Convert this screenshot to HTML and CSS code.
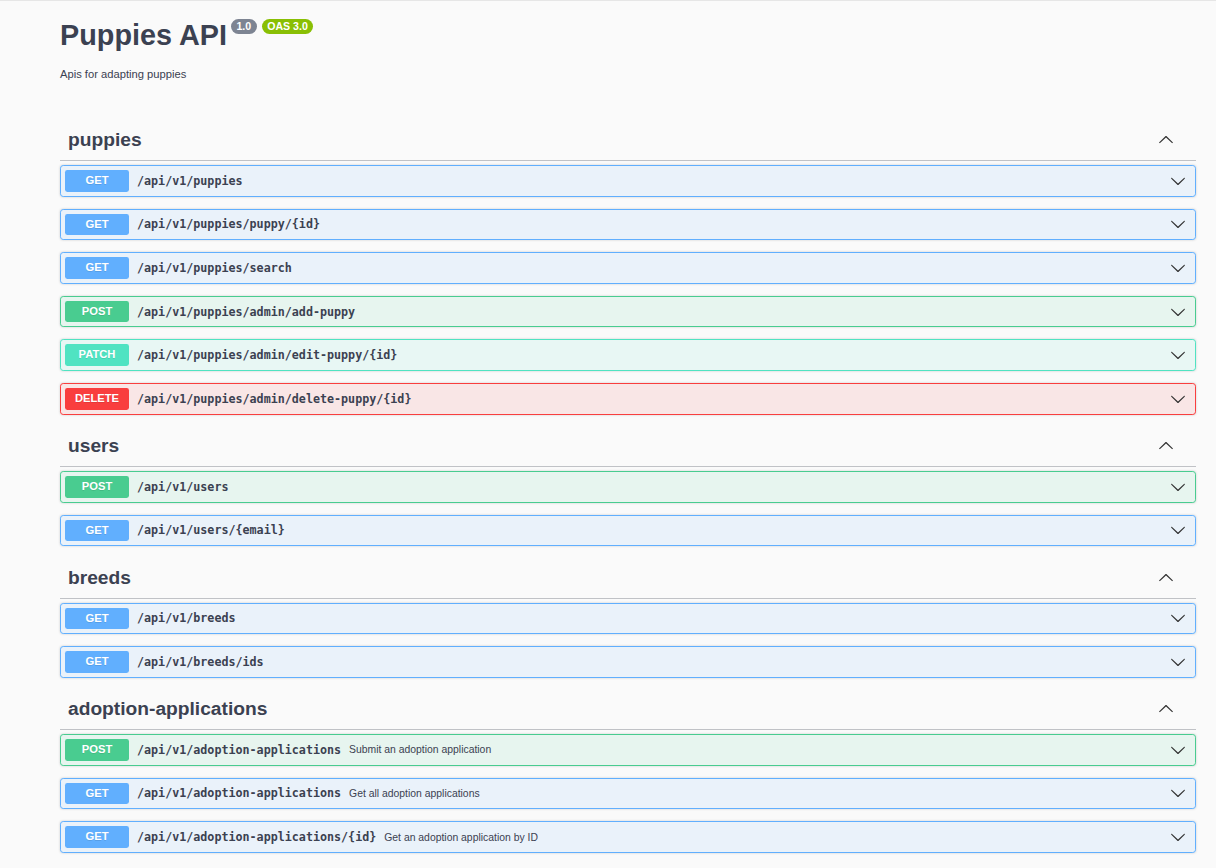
FILE: index.html
```html
<!DOCTYPE html>
<html lang="en">
<head>
<meta charset="utf-8">
<title>Puppies API</title>
<link rel="stylesheet" href="styles.css">
</head>
<body>
<div class="page">
  <div class="info">
    <div class="title-row">
      <h2 class="title">Puppies API</h2>
      <span class="badge badge-version">1.0</span>
      <span class="badge badge-oas">OAS 3.0</span>
    </div>
    <p class="description">Apis for adapting puppies</p>
  </div>

  <section class="tag-section">
    <h3 class="tag">
      <span class="tag-name">puppies</span>
      <svg class="tag-arrow" viewBox="0 0 20 20"><path d="M17.418 6.109c.272-.268.709-.268.979 0s.271.701 0 .969l-7.908 7.83c-.27.268-.707.268-.979 0l-7.908-7.83c-.27-.268-.27-.701 0-.969.271-.268.709-.268.979 0L10 13.25l7.418-7.141z"/></svg>
    </h3>
    <div class="opblock get"><span class="method">GET</span><span class="path">/api/v1/puppies</span><svg class="op-arrow" viewBox="0 0 20 20"><path d="M17.418 6.109c.272-.268.709-.268.979 0s.271.701 0 .969l-7.908 7.83c-.27.268-.707.268-.979 0l-7.908-7.83c-.27-.268-.27-.701 0-.969.271-.268.709-.268.979 0L10 13.25l7.418-7.141z"/></svg></div>
    <div class="opblock get"><span class="method">GET</span><span class="path">/api/v1/puppies/puppy/{id}</span><svg class="op-arrow" viewBox="0 0 20 20"><path d="M17.418 6.109c.272-.268.709-.268.979 0s.271.701 0 .969l-7.908 7.83c-.27.268-.707.268-.979 0l-7.908-7.83c-.27-.268-.27-.701 0-.969.271-.268.709-.268.979 0L10 13.25l7.418-7.141z"/></svg></div>
    <div class="opblock get"><span class="method">GET</span><span class="path">/api/v1/puppies/search</span><svg class="op-arrow" viewBox="0 0 20 20"><path d="M17.418 6.109c.272-.268.709-.268.979 0s.271.701 0 .969l-7.908 7.83c-.27.268-.707.268-.979 0l-7.908-7.83c-.27-.268-.27-.701 0-.969.271-.268.709-.268.979 0L10 13.25l7.418-7.141z"/></svg></div>
    <div class="opblock post"><span class="method">POST</span><span class="path">/api/v1/puppies/admin/add-puppy</span><svg class="op-arrow" viewBox="0 0 20 20"><path d="M17.418 6.109c.272-.268.709-.268.979 0s.271.701 0 .969l-7.908 7.83c-.27.268-.707.268-.979 0l-7.908-7.83c-.27-.268-.27-.701 0-.969.271-.268.709-.268.979 0L10 13.25l7.418-7.141z"/></svg></div>
    <div class="opblock patch"><span class="method">PATCH</span><span class="path">/api/v1/puppies/admin/edit-puppy/{id}</span><svg class="op-arrow" viewBox="0 0 20 20"><path d="M17.418 6.109c.272-.268.709-.268.979 0s.271.701 0 .969l-7.908 7.83c-.27.268-.707.268-.979 0l-7.908-7.83c-.27-.268-.27-.701 0-.969.271-.268.709-.268.979 0L10 13.25l7.418-7.141z"/></svg></div>
    <div class="opblock delete"><span class="method">DELETE</span><span class="path">/api/v1/puppies/admin/delete-puppy/{id}</span><svg class="op-arrow" viewBox="0 0 20 20"><path d="M17.418 6.109c.272-.268.709-.268.979 0s.271.701 0 .969l-7.908 7.83c-.27.268-.707.268-.979 0l-7.908-7.83c-.27-.268-.27-.701 0-.969.271-.268.709-.268.979 0L10 13.25l7.418-7.141z"/></svg></div>
  </section>

  <section class="tag-section">
    <h3 class="tag">
      <span class="tag-name">users</span>
      <svg class="tag-arrow" viewBox="0 0 20 20"><path d="M17.418 6.109c.272-.268.709-.268.979 0s.271.701 0 .969l-7.908 7.83c-.27.268-.707.268-.979 0l-7.908-7.83c-.27-.268-.27-.701 0-.969.271-.268.709-.268.979 0L10 13.25l7.418-7.141z"/></svg>
    </h3>
    <div class="opblock post"><span class="method">POST</span><span class="path">/api/v1/users</span><svg class="op-arrow" viewBox="0 0 20 20"><path d="M17.418 6.109c.272-.268.709-.268.979 0s.271.701 0 .969l-7.908 7.83c-.27.268-.707.268-.979 0l-7.908-7.83c-.27-.268-.27-.701 0-.969.271-.268.709-.268.979 0L10 13.25l7.418-7.141z"/></svg></div>
    <div class="opblock get"><span class="method">GET</span><span class="path">/api/v1/users/{email}</span><svg class="op-arrow" viewBox="0 0 20 20"><path d="M17.418 6.109c.272-.268.709-.268.979 0s.271.701 0 .969l-7.908 7.83c-.27.268-.707.268-.979 0l-7.908-7.83c-.27-.268-.27-.701 0-.969.271-.268.709-.268.979 0L10 13.25l7.418-7.141z"/></svg></div>
  </section>

  <section class="tag-section">
    <h3 class="tag">
      <span class="tag-name">breeds</span>
      <svg class="tag-arrow" viewBox="0 0 20 20"><path d="M17.418 6.109c.272-.268.709-.268.979 0s.271.701 0 .969l-7.908 7.83c-.27.268-.707.268-.979 0l-7.908-7.83c-.27-.268-.27-.701 0-.969.271-.268.709-.268.979 0L10 13.25l7.418-7.141z"/></svg>
    </h3>
    <div class="opblock get"><span class="method">GET</span><span class="path">/api/v1/breeds</span><svg class="op-arrow" viewBox="0 0 20 20"><path d="M17.418 6.109c.272-.268.709-.268.979 0s.271.701 0 .969l-7.908 7.83c-.27.268-.707.268-.979 0l-7.908-7.83c-.27-.268-.27-.701 0-.969.271-.268.709-.268.979 0L10 13.25l7.418-7.141z"/></svg></div>
    <div class="opblock get"><span class="method">GET</span><span class="path">/api/v1/breeds/ids</span><svg class="op-arrow" viewBox="0 0 20 20"><path d="M17.418 6.109c.272-.268.709-.268.979 0s.271.701 0 .969l-7.908 7.83c-.27.268-.707.268-.979 0l-7.908-7.83c-.27-.268-.27-.701 0-.969.271-.268.709-.268.979 0L10 13.25l7.418-7.141z"/></svg></div>
  </section>

  <section class="tag-section">
    <h3 class="tag">
      <span class="tag-name">adoption-applications</span>
      <svg class="tag-arrow" viewBox="0 0 20 20"><path d="M17.418 6.109c.272-.268.709-.268.979 0s.271.701 0 .969l-7.908 7.83c-.27.268-.707.268-.979 0l-7.908-7.83c-.27-.268-.27-.701 0-.969.271-.268.709-.268.979 0L10 13.25l7.418-7.141z"/></svg>
    </h3>
    <div class="opblock post"><span class="method">POST</span><span class="path">/api/v1/adoption-applications</span><span class="summary">Submit an adoption application</span><svg class="op-arrow" viewBox="0 0 20 20"><path d="M17.418 6.109c.272-.268.709-.268.979 0s.271.701 0 .969l-7.908 7.83c-.27.268-.707.268-.979 0l-7.908-7.83c-.27-.268-.27-.701 0-.969.271-.268.709-.268.979 0L10 13.25l7.418-7.141z"/></svg></div>
    <div class="opblock get"><span class="method">GET</span><span class="path">/api/v1/adoption-applications</span><span class="summary">Get all adoption applications</span><svg class="op-arrow" viewBox="0 0 20 20"><path d="M17.418 6.109c.272-.268.709-.268.979 0s.271.701 0 .969l-7.908 7.83c-.27.268-.707.268-.979 0l-7.908-7.83c-.27-.268-.27-.701 0-.969.271-.268.709-.268.979 0L10 13.25l7.418-7.141z"/></svg></div>
    <div class="opblock get"><span class="method">GET</span><span class="path">/api/v1/adoption-applications/{id}</span><span class="summary">Get an adoption application by ID</span><svg class="op-arrow" viewBox="0 0 20 20"><path d="M17.418 6.109c.272-.268.709-.268.979 0s.271.701 0 .969l-7.908 7.83c-.27.268-.707.268-.979 0l-7.908-7.83c-.27-.268-.27-.701 0-.969.271-.268.709-.268.979 0L10 13.25l7.418-7.141z"/></svg></div>
  </section>
</div>
</body>
</html>
```

FILE: styles.css
```css
html, body {
  margin: 0;
  padding: 0;
  background: #fafafa;
}
body {
  border-top: 1px solid #e6e6e6;
  font-family: "Liberation Sans", Arial, sans-serif;
  color: #3b4151;
  overflow: hidden;
}
.page {
  width: 1136px;
  margin-left: 60px;
  display: flex;
  flex-direction: column;
}
.info {
  padding-top: 16px;
}
.title-row {
  display: flex;
  align-items: flex-start;
}
.title {
  margin: 0;
  font-size: 28.8px;
  line-height: 36px;
  font-weight: 700;
  color: #3b4151;
}
.badge {
  display: inline-block;
  margin-top: 2px;
  padding: 0 5.5px;
  border-radius: 46px;
  font-size: 10.6px;
  line-height: 14.5px;
  font-weight: 700;
  color: #fff;
}
.badge-version {
  margin-left: 4px;
  background: #7d8492;
}
.badge-oas {
  margin-left: 5px;
  background: #89bf04;
}
.description {
  margin: 14px 0 0;
  font-size: 11.2px;
  line-height: 14px;
  color: #3b4151;
}
.tag-section {
  display: flex;
  flex-direction: column;
}
.tag-section:first-of-type {
  margin-top: 39.6px;
}
.tag {
  margin: 0 0 4px;
  height: 40.4px;
  box-sizing: border-box;
  padding: 0 22px 0 8px;
  display: flex;
  align-items: center;
  justify-content: space-between;
  border-bottom: 1px solid rgba(59, 65, 81, 0.3);
  font-size: 19.2px;
  font-weight: 700;
  color: #3b4151;
}
.tag-name {
  line-height: 24px;
}
.tag-arrow {
  width: 16px;
  height: 16px;
  fill: #333;
  transform: rotate(180deg);
}
.opblock {
  display: flex;
  align-items: center;
  margin: 0 0 12px;
  padding: 4px;
  border: 1px solid;
  border-radius: 3.2px;
  box-shadow: 0 0 2.4px rgba(0, 0, 0, 0.19);
}
.method {
  flex: none;
  width: 64px;
  height: 21.6px;
  line-height: 21.6px;
  text-align: center;
  border-radius: 2.4px;
  font-size: 11.2px;
  font-weight: 700;
  color: #fff;
  text-shadow: 0 1px 0 rgba(0, 0, 0, 0.1);
}
.path {
  padding: 0 8px;
  font-family: "DejaVu Sans Mono", monospace;
  font-size: 11.7px;
  font-weight: 600;
  color: #3b4151;
  white-space: nowrap;
}
.summary {
  font-size: 10.4px;
  color: #3b4151;
}
.op-arrow {
  margin-left: auto;
  margin-right: 5px;
  width: 16px;
  height: 16px;
  fill: #333;
}
.get {
  border-color: #61affe;
  background: rgba(97, 175, 254, 0.1);
}
.get .method { background: #61affe; }
.post {
  border-color: #49cc90;
  background: rgba(73, 204, 144, 0.1);
}
.post .method { background: #49cc90; }
.patch {
  border-color: #50e3c2;
  background: rgba(80, 227, 194, 0.1);
}
.patch .method { background: #50e3c2; }
.delete {
  border-color: #f93e3e;
  background: rgba(249, 62, 62, 0.1);
}
.delete .method { background: #f93e3e; }
```
